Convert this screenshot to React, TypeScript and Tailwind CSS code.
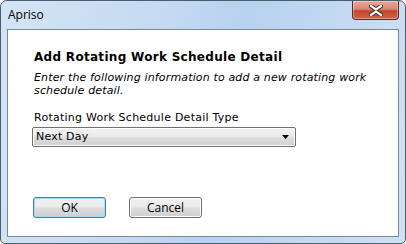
const body = "font-['DejaVu_Sans',Verdana,sans-serif]";
const ui = "font-['Open_Sans','Noto_Sans',sans-serif]";

const CloseButton = () => {
  return (
    <button className="absolute top-0 right-[6px] flex h-[19px] w-[47px] items-center justify-center rounded-b-[4px] border border-t-0 border-[#5b2a22] bg-[linear-gradient(#eaa898_0%,#d98672_45%,#c6452c_55%,#d0624a_100%)] shadow-[inset_0_0_0_1px_rgba(255,255,255,0.35)]">
      <svg width="14" height="11" viewBox="0 0 14 11">
        <path
          d="M2 1 L7 4.5 L12 1 M2 10 L7 6.5 L12 10"
          stroke="#3a2a28"
          strokeWidth="4.2"
          fill="none"
          strokeLinecap="square"
        />
        <path
          d="M2 1 L7 4.5 L12 1 M2 10 L7 6.5 L12 10"
          stroke="#ffffff"
          strokeWidth="2.2"
          fill="none"
          strokeLinecap="square"
        />
      </svg>
    </button>
  );
};

const DialogButton = ({ label, isDefault }: { label: string; isDefault?: boolean }) => {
  return (
    <button
      className={`h-[21px] w-[73px] rounded-[3px] border text-[12px] leading-none text-black ${ui} bg-[linear-gradient(#f2f2f2_0%,#ebebeb_45%,#dddddd_55%,#cfcfcf_100%)] ${
        isDefault
          ? "border-[#3c7fb1] shadow-[inset_0_0_0_1px_#a6d9f4]"
          : "border-[#707070] shadow-[inset_0_0_0_1px_#fcfcfc]"
      }`}
    >
      {label}
    </button>
  );
};

export default function App() {
  return (
    <div className="h-[244px] w-[406px] overflow-hidden bg-white">
      <div className="relative flex h-full w-full flex-col rounded-t-[7px] rounded-b-[5px] border border-[#4c5d70] bg-[linear-gradient(100deg,#d4e4f5_0%,#c3d9f1_40%,#b7d2ef_55%,#cfe1f4_100%)]">
        <div className="flex h-[28px] shrink-0 items-center pl-[7px]">
          <span className={`text-[12px] text-black ${ui}`}>Apriso</span>
        </div>
        <CloseButton />

        <div className="mx-[6px] mb-[6px] flex flex-1 flex-col border border-[#7a8898] bg-white pl-[26px] pt-[19px]">
          <h1 className={`text-[12px] font-bold leading-[16px] tracking-[0.3px] text-black ${body}`}>
            Add Rotating Work Schedule Detail
          </h1>
          <p className={`mt-[6px] w-[345px] text-[11px] italic leading-[13px] tracking-[0.15px] text-black ${body}`}>
            Enter the following information to add a new rotating work schedule detail.
          </p>

          <label className={`mt-[14px] text-[11px] leading-[13px] tracking-[0.25px] text-black ${body}`}>
            Rotating Work Schedule Detail Type
          </label>
          <div className="ml-[-2px] mt-[3px] flex h-[20px] w-[264px] items-center justify-between rounded-[2px] border border-[#707070] bg-[linear-gradient(#f2f2f2_0%,#ebebeb_45%,#dddddd_55%,#cfcfcf_100%)] pl-[3px] pr-[6px] shadow-[inset_0_0_0_1px_#fcfcfc]">
            <span className={`text-[11px] tracking-[0.2px] text-black ${body}`}>Next Day</span>
            <svg width="7" height="4" viewBox="0 0 7 4">
              <path d="M0 0 H7 L3.5 4 Z" fill="#000" />
            </svg>
          </div>

          <div className="ml-[-1px] mt-[50px] flex gap-[23px]">
            <DialogButton label="OK" isDefault />
            <DialogButton label="Cancel" />
          </div>
        </div>
      </div>
    </div>
  );
}
